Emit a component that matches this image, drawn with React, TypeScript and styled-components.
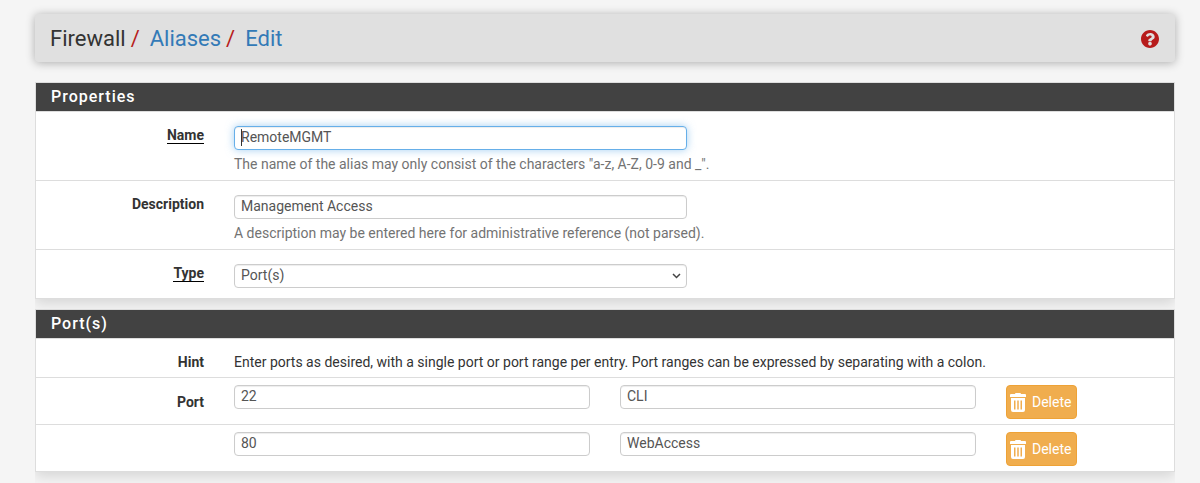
import React from "react";
import styled, { createGlobalStyle, css } from "styled-components";

const GlobalStyle = createGlobalStyle`
  *, *::before, *::after { box-sizing: border-box; }
  body {
    margin: 0;
    background: #f5f5f5;
    color: #333;
    font: 400 14px/20px Roboto, "Liberation Sans", sans-serif;
  }
`;

const Page = styled.main`
  padding: 14px 25px 1px 35px;
`;

const Header = styled.header`
  display: flex;
  align-items: center;
  justify-content: space-between;
  height: 48px;
  margin-bottom: 20px;
  padding: 2px 16px 0 15px;
  border-radius: 4px;
  background: #e0e0e0;
  box-shadow: 0 1px 10px rgba(0, 0, 0, 0.3);
`;

const Breadcrumb = styled.ol`
  display: flex;
  margin: 0;
  padding: 0;
  list-style: none;
  font-size: 22px;
  line-height: 28px;
`;

const Crumb = styled.li`
  & + &::before {
    content: "/";
    padding: 0 10px 0 5px;
    color: #b71c1c;
  }
`;

const Link = styled.a`
  color: #337ab7;
  text-decoration: none;
`;

const HelpLink = styled.a`
  display: flex;
  color: #b71c1c;
`;

const Panel = styled.section`
  margin-bottom: 10px;
  border: 1px solid #ddd;
  background: #fff;
  box-shadow: 0 5px 12px rgba(0, 0, 0, 0.12);
  clip-path: inset(0 0 -20px 0);
`;

const PanelTitle = styled.h2`
  margin: 0;
  padding: 4px 15px;
  border-bottom: 1px solid #ddd;
  background: #424242;
  background-clip: padding-box;
  color: #fff;
  font-size: 16px;
  font-weight: 500;
  line-height: 20px;
  letter-spacing: 1px;
`;

const spacing = {
  field: "14px 0 10px",
  described: "14px 0 6px",
  text: "14px 0 6px",
  entry: "7px 0 5px",
};

const Row = styled.div<{ $kind: keyof typeof spacing }>`
  padding: ${(p) => spacing[p.$kind]};
  & + & {
    border-top: 1px solid #ddd;
  }
`;

const Grid = styled.div`
  display: grid;
  grid-template-columns: repeat(12, minmax(0, 1fr));
  margin: 0 -10px;
`;

const Cell = styled.div<{ $span: number }>`
  grid-column: span ${(p) => p.$span};
  padding: 0 15px;
  line-height: 18px;
`;

const LabelCell = styled(Cell)<{ $drop?: boolean }>`
  padding-top: ${(p) => (p.$drop ? "8px" : "0")};
  text-align: right;
  font-weight: 700;
`;

const LabelText = styled.span<{ $required?: boolean }>`
  display: inline-block;
  line-height: 16px;
  ${(p) => p.$required && css`border-bottom: 1px solid #000;`}
`;

const control = css`
  display: block;
  width: 100%;
  height: 24px;
  border: 1px solid #ccc;
  border-radius: 4px;
  background-color: #fff;
  box-shadow: inset 0 1px 1px rgba(0, 0, 0, 0.075);
  color: #555;
  font: 400 14px/20px Roboto, "Liberation Sans", sans-serif;
  outline: 0;
`;

const TextInput = styled.input<{ $active?: boolean }>`
  ${control}
  padding: 0 6px 2px;
  ${(p) =>
    p.$active &&
    css`
      border-color: #66afe9;
      box-shadow: inset 0 1px 1px rgba(0, 0, 0, 0.075), 0 0 8px rgba(102, 175, 233, 0.6);
    `}
`;

const InputWrap = styled.div`
  position: relative;
`;

const Caret = styled.span`
  position: absolute;
  top: 3px;
  left: 7px;
  width: 1px;
  height: 17px;
  background: #333;
`;

const Select = styled.select`
  ${control}
  appearance: none;
  padding: 0 24px 2px 6px;
`;

const Chevron = styled.svg`
  position: absolute;
  top: 8px;
  right: 5px;
  pointer-events: none;
`;

const HelpText = styled.span`
  display: block;
  margin-top: 4px;
  color: #737373;
  line-height: 20px;
  white-space: nowrap;
`;

const DeleteButton = styled.button`
  display: flex;
  align-items: center;
  gap: 6px;
  height: 34px;
  padding: 0 5px 0 3px;
  border: 1px solid #eea236;
  border-radius: 4px;
  background: #f0ad4e;
  color: #fff;
  font: 400 14px/20px Roboto, "Liberation Sans", sans-serif;
`;

const TrashIcon = () => (
  <svg width="16" height="19" viewBox="0 0 16 19" fill="#fff" aria-hidden="true">
    <path d="M5 1Q5 0 6 0h4Q11 0 11 1h4Q16 1 16 2v2H0V2Q0 1 1 1z" />
    <path fillRule="evenodd" d="M1 5h14v12Q15 19 13 19H3Q1 19 1 17zM4 7.500v9h1.500v-9zM7.250 7.500v9h1.500v-9zM10.500 7.500v9H12v-9z" />
  </svg>
);

const HelpIcon = () => (
  <svg width="18" height="18" viewBox="8 8 496 496" fill="currentColor" aria-hidden="true">
    <path d="M504 256c0 137-111 248-248 248S8 393 8 256 119 8 256 8s248 111 248 248zM262.700 90c-54.500 0-89.300 23-116.500 63.800-3.500 5.300-2.400 12.400 2.700 16.300l34.700 26.300c5.200 3.900 12.600 3 16.700-2.100 17.900-22.700 30.100-35.800 57.300-35.800 20.400 0 45.700 13.100 45.700 33 0 15-12.400 22.700-32.500 34C247.100 238.500 208 254.900 208 296v8c0 6.600 5.400 12 12 12h72c6.600 0 12-5.400 12-12v-5.300c0-28.500 81.200-29.600 81.200-106.700 0-58-66.200-102-122.500-102zM256 334c-27.600 0-50 22.400-50 50s22.400 50 50 50 50-22.400 50-50-22.400-50-50-50z" />
  </svg>
);

const ports = [
  { port: "22", description: "CLI" },
  { port: "80", description: "WebAccess" },
];

export default function App() {
  return (
    <>
      <GlobalStyle />
      <Page>
        <Header>
          <Breadcrumb>
            <Crumb>Firewall</Crumb>
            <Crumb><Link href="#aliases">Aliases</Link></Crumb>
            <Crumb><Link href="#edit">Edit</Link></Crumb>
          </Breadcrumb>
          <HelpLink href="#help" aria-label="Help"><HelpIcon /></HelpLink>
        </Header>

        <Panel>
          <PanelTitle>Properties</PanelTitle>
          <Row $kind="described">
            <Grid>
              <LabelCell $span={2} as="label" htmlFor="name"><LabelText $required>Name</LabelText></LabelCell>
              <Cell $span={5}>
                <InputWrap>
                  <TextInput id="name" defaultValue="RemoteMGMT" $active />
                  <Caret />
                </InputWrap>
                <HelpText>The name of the alias may only consist of the characters "a-z, A-Z, 0-9 and _".</HelpText>
              </Cell>
            </Grid>
          </Row>
          <Row $kind="described">
            <Grid>
              <LabelCell $span={2} as="label" htmlFor="description"><LabelText>Description</LabelText></LabelCell>
              <Cell $span={5}>
                <TextInput id="description" defaultValue="Management Access" />
                <HelpText>A description may be entered here for administrative reference (not parsed).</HelpText>
              </Cell>
            </Grid>
          </Row>
          <Row $kind="field">
            <Grid>
              <LabelCell $span={2} as="label" htmlFor="type"><LabelText $required>Type</LabelText></LabelCell>
              <Cell $span={5}>
                <InputWrap>
                  <Select id="type" defaultValue="port">
                    <option value="port">Port(s)</option>
                  </Select>
                  <Chevron width="10" height="8" viewBox="0 0 10 8" fill="none" stroke="#444" strokeWidth="1.5" aria-hidden="true">
                    <path d="M1 2 4.500 5.500 8 2" />
                  </Chevron>
                </InputWrap>
              </Cell>
            </Grid>
          </Row>
        </Panel>

        <Panel>
          <PanelTitle>Port(s)</PanelTitle>
          <Row $kind="text">
            <Grid>
              <LabelCell $span={2}><LabelText>Hint</LabelText></LabelCell>
              <Cell $span={10}>Enter ports as desired, with a single port or port range per entry. Port ranges can be expressed by separating with a colon.</Cell>
            </Grid>
          </Row>
          {ports.map((entry, i) => (
            <Row $kind="entry" key={entry.port}>
              <Grid>
                <LabelCell $span={2} $drop as="label" htmlFor={`port${i}`}>
                  {i === 0 && <LabelText>Port</LabelText>}
                </LabelCell>
                <Cell $span={4}><TextInput id={`port${i}`} aria-label="Port" defaultValue={entry.port} /></Cell>
                <Cell $span={4}><TextInput aria-label="Port description" defaultValue={entry.description} /></Cell>
                <Cell $span={2}>
                  <DeleteButton type="button"><TrashIcon />Delete</DeleteButton>
                </Cell>
              </Grid>
            </Row>
          ))}
        </Panel>
      </Page>
    </>
  );
}
